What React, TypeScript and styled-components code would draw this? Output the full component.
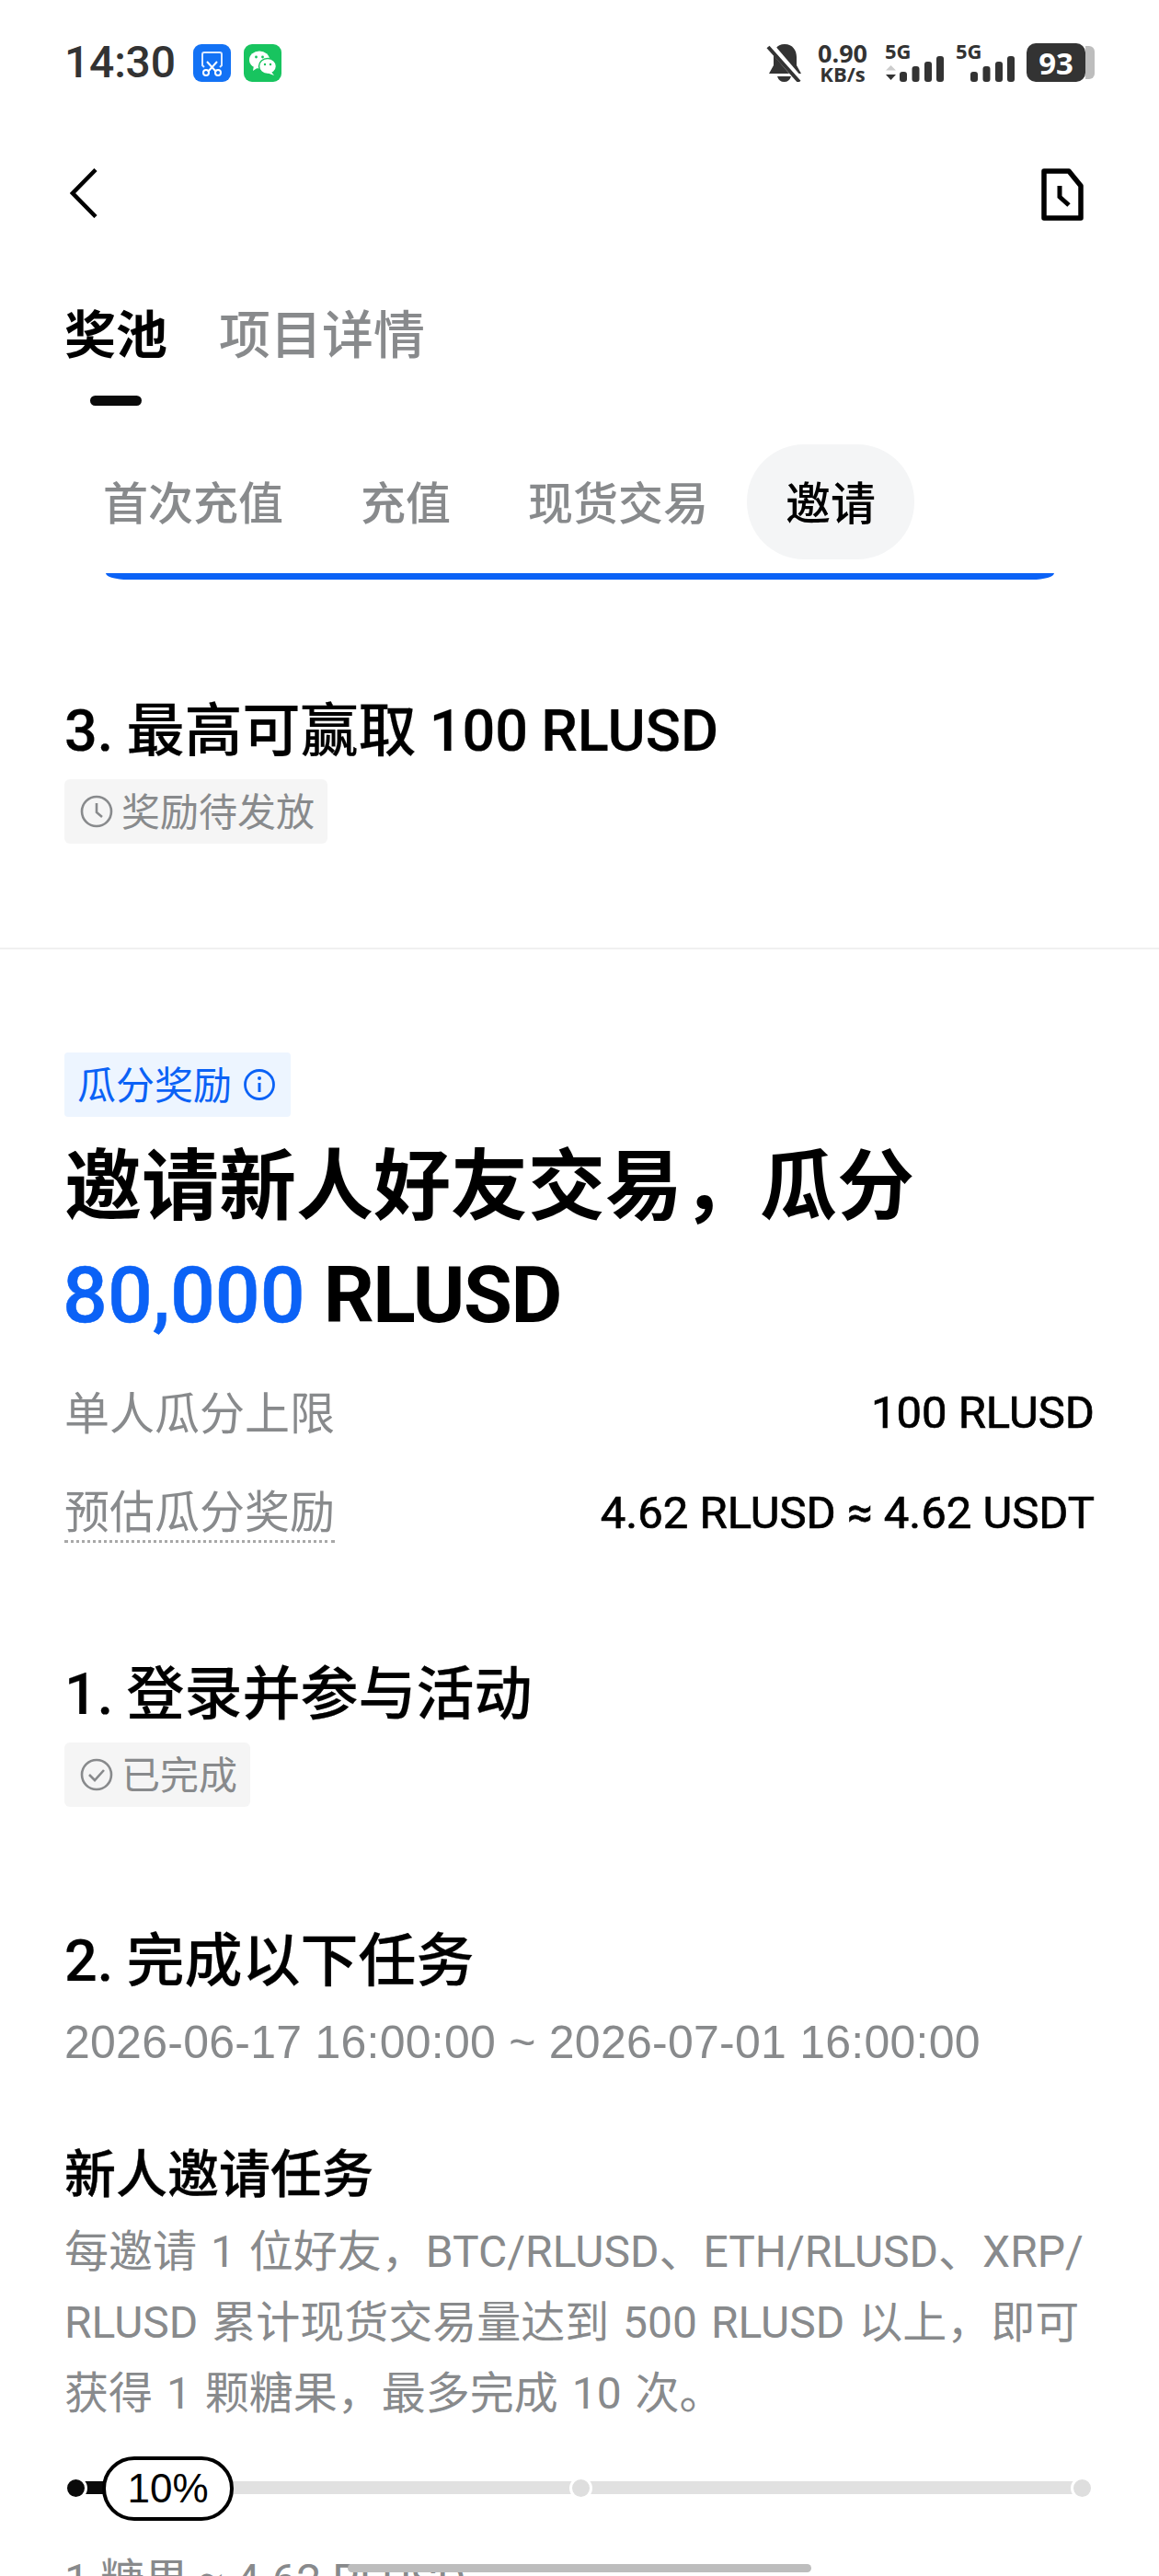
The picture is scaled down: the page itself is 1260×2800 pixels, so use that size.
import React from "react";
import styled, { createGlobalStyle } from "styled-components";

const GlobalStyle = createGlobalStyle`
  html, body {
    margin: 0;
    padding: 0;
    background: #fff;
  }
  * {
    box-sizing: border-box;
  }
`;

const fontStack = `"Liberation Sans", "Noto Sans CJK SC", sans-serif`;
const latinStack = `Roboto, "Noto Sans CJK SC", sans-serif`;
const blue = "#0b62f6";
const gray = "#888a8c";

const Page = styled.div`
  position: relative;
  width: 1260px;
  height: 2800px;
  overflow: hidden;
  background: #fff;
  color: #000;
  font-family: ${fontStack};
`;

const StatusBar = styled.div`
  display: flex;
  align-items: center;
  justify-content: space-between;
  height: 42px;
  margin-top: 47px;
  padding: 0 70px;
  color: #333;
`;

const StatusGroup = styled.div<{ $gap: number }>`
  display: flex;
  align-items: center;
  gap: ${(p) => p.$gap}px;
`;

const Clock = styled.span`
  width: 126px;
  font-family: Roboto, sans-serif;
  font-size: 48px;
  font-weight: 500;
  line-height: 42px;
  letter-spacing: -0.2px;
`;

const Speed = styled.div`
  display: flex;
  flex-direction: column;
  align-items: center;
  width: 52px;
  margin: 0 7px 0 4px;
  font-family: "Open Sans", sans-serif;
  font-weight: 700;
  color: #333;
`;

const SpeedValue = styled.span`
  font-size: 27px;
  line-height: 24px;
`;

const SpeedUnit = styled.span`
  font-size: 22px;
  line-height: 20px;
`;

const Battery = styled.div`
  position: relative;
  display: flex;
  align-items: center;
  justify-content: center;
  width: 64px;
  height: 42px;
  margin-right: 10px;
  border-radius: 10px;
  background: #333;
  color: #fff;
  font-family: "Open Sans", sans-serif;
  font-size: 33px;
  font-weight: 700;
  &::after {
    content: "";
    position: absolute;
    right: -10px;
    top: 3px;
    width: 10px;
    height: 36px;
    border-radius: 0 6px 6px 0;
    background: #bdbdbd;
  }
`;

const NavRow = styled.div`
  display: flex;
  align-items: flex-start;
  justify-content: space-between;
  height: 57px;
  margin-top: 94px;
  padding: 0 82px 0 76px;
`;

const MainTabs = styled.div`
  display: flex;
  gap: 56px;
  height: 72px;
  margin-top: 88px;
  padding: 2px 70px 0;
`;

const MainTab = styled.span<{ $active?: boolean }>`
  font-size: 56px;
  line-height: 70px;
  font-weight: ${(p) => (p.$active ? 700 : 500)};
  color: ${(p) => (p.$active ? "#000" : gray)};
`;

const TabMarker = styled.div`
  width: 56px;
  height: 11px;
  margin: 30px 0 0 98px;
  border-radius: 6px;
  background: #0a0a0a;
`;

const SubTabs = styled.div`
  display: flex;
  margin-top: 42px;
  padding-left: 70px;
`;

const SubTab = styled.div<{ $active?: boolean }>`
  display: flex;
  align-items: center;
  height: 125px;
  padding: 0 42px 5px;
  border-radius: 62px;
  font-size: 49px;
  font-weight: 500;
  color: ${(p) => (p.$active ? "#000" : gray)};
  background: ${(p) => (p.$active ? "#f4f5f6" : "transparent")};
`;

const CardEdge = styled.div`
  width: 1031px;
  height: 7px;
  margin: 15px 0 0 115px;
  border-radius: 0 0 24px 24px / 0 0 7px 7px;
  background: ${blue};
`;

const Section = styled.section<{ $top?: number }>`
  margin-top: ${(p) => p.$top ?? 0}px;
  padding: 0 70px;
`;

const StepTitle = styled.h3<{ $top?: number }>`
  height: 80px;
  margin: ${(p) => p.$top ?? 0}px 0 0;
  padding-top: 6px;
  font-family: ${latinStack};
  font-size: 63px;
  line-height: 74px;
  font-weight: 500;
  word-spacing: -1.5px;
  -webkit-text-stroke: 0.2px #000;
`;

const StatusTag = styled.div`
  display: inline-flex;
  align-items: center;
  gap: 9px;
  height: 70px;
  margin-top: 15px;
  padding: 0 14px 5px 17px;
  border-radius: 6px;
  background: #f5f5f5;
  color: ${gray};
  font-size: 42px;
  vertical-align: top;
  svg {
    margin-top: 5px;
  }
`;

const Divider = styled.div`
  height: 2px;
  margin-top: 113px;
  background: #f0f0f0;
`;

const RewardTag = styled.div`
  display: inline-flex;
  align-items: center;
  gap: 12px;
  height: 70px;
  padding: 0 16px 5px 14px;
  border-radius: 4px;
  background: #edf5ff;
  color: ${blue};
  font-size: 42px;
  vertical-align: top;
  svg {
    margin-top: 5px;
  }
`;

const Headline = styled.h1`
  margin: 18px 0 0;
  font-family: ${latinStack};
  font-size: 84px;
  line-height: 117px;
  font-weight: 700;
`;

const Amount = styled.span`
  margin-right: 20px;
  margin-left: -2px;
  color: ${blue};
  font-size: 86px;
  font-weight: 500;
  -webkit-text-stroke: 0.5px ${blue};
`;

const Unit = styled.span`
  font-size: 86px;
  letter-spacing: -1.5px;
`;

const InfoRows = styled.div`
  margin-top: 15px;
`;

const InfoRow = styled.div`
  display: flex;
  align-items: center;
  justify-content: space-between;
  height: 109px;
`;

const InfoLabel = styled.span<{ $dashed?: boolean }>`
  font-size: 49px;
  line-height: 60px;
  color: ${gray};
  border-bottom: ${(p) => (p.$dashed ? `3px dotted #a8a8a8` : "none")};
`;

const InfoValue = styled.span`
  padding-bottom: 3px;
  font-family: ${latinStack};
  font-size: 49px;
  font-weight: 400;
  -webkit-text-stroke: 0.7px #000;
`;

const DateRange = styled.div`
  margin-top: 19px;
  font-size: 50px;
  line-height: 64px;
  color: ${gray};
  letter-spacing: 0.25px;
`;

const TaskTitle = styled.h4`
  height: 72px;
  margin: 74px 0 0;
  padding-top: 4px;
  font-size: 56px;
  line-height: 68px;
  font-weight: 500;
  -webkit-text-stroke: 0.4px #000;
`;

const TaskBody = styled.p`
  margin: 11px 0 0;
  font-family: ${latinStack};
  font-size: 48px;
  line-height: 77px;
  word-spacing: 3px;
  color: ${gray};
  white-space: nowrap;
`;

const Progress = styled.div`
  position: relative;
  height: 70px;
  margin-top: 30px;
`;

const Track = styled.div`
  position: absolute;
  left: 3px;
  right: 14px;
  top: 27px;
  height: 14px;
  background: #e1e1e1;
`;

const TrackFill = styled.div<{ $width: number }>`
  position: absolute;
  left: 0;
  top: 0;
  bottom: 0;
  width: ${(p) => p.$width}px;
  background: #0a0a0a;
`;

const ProgressNode = styled.div<{ $left: number; $done?: boolean }>`
  position: absolute;
  left: ${(p) => p.$left}px;
  top: 22px;
  width: 25px;
  height: 25px;
  border: 3px solid #fff;
  border-radius: 50%;
  background: ${(p) => (p.$done ? "#0a0a0a" : "#dedede")};
`;

const ProgressBubble = styled.div`
  position: absolute;
  left: 41px;
  top: 0;
  display: flex;
  align-items: center;
  justify-content: center;
  width: 143px;
  height: 70px;
  border: 4px solid #000;
  border-radius: 35px;
  background: #fff;
  font-size: 44px;
`;

const RewardLine = styled.div`
  margin-top: 33px;
  font-family: ${latinStack};
  font-size: 48px;
  line-height: 64px;
  color: ${gray};
`;

const HomeIndicator = styled.div`
  position: absolute;
  left: 378px;
  top: 2787px;
  width: 504px;
  height: 9px;
  border-radius: 5px;
  background: #bdbdbd;
`;

const ScreenCutIcon = () => (
  <svg width="41" height="41" viewBox="0 0 41 41">
    <rect width="41" height="41" rx="9" fill="#1372f5" />
    <path d="M12 25 L10 23 V11 Q10 9 12 9 H29 Q31 9 31 11 V23 L29 25" fill="none" stroke="#dbe9ff" strokeWidth="2" />
    <path d="M15 19 L25 30 M26 19 L16 30" stroke="#fff" strokeWidth="2" />
    <circle cx="14" cy="31" r="3" fill="none" stroke="#fff" strokeWidth="2" />
    <circle cx="27" cy="31" r="3" fill="none" stroke="#fff" strokeWidth="2" />
  </svg>
);

const ChatIcon = () => (
  <svg width="41" height="41" viewBox="0 0 41 41">
    <rect width="41" height="41" rx="9" fill="#18c45f" />
    <ellipse cx="17" cy="17" rx="11" ry="9.5" fill="#fff" />
    <path d="M11 23 L10 29 L16 25 Z" fill="#fff" />
    <ellipse cx="26" cy="24" rx="9.5" ry="8.5" fill="#fff" stroke="#18c45f" strokeWidth="1.5" />
    <path d="M30 30 L33 34 L25 31 Z" fill="#fff" />
    <circle cx="13.5" cy="14" r="1.4" fill="#18c45f" />
    <circle cx="20.5" cy="14" r="1.4" fill="#18c45f" />
    <circle cx="23" cy="22" r="1.2" fill="#18c45f" />
    <circle cx="29" cy="22" r="1.2" fill="#18c45f" />
  </svg>
);

const BellOffIcon = () => (
  <svg width="40" height="42" viewBox="0 0 40 42">
    <path d="M20 1 C29 1 33 8 33 15 V24 L38 33 H3 L8 24 V15 C8 8 11 1 20 1 Z" fill="#333" />
    <path d="M12 36 H27 Q25 42 19.5 42 Q14 42 12 36 Z" fill="#333" />
    <path d="M2 0 L38 42" stroke="#fff" strokeWidth="8" />
    <path d="M2 4 L36 42" stroke="#333" strokeWidth="4" />
  </svg>
);

const SignalIcon = ({ arrows }: { arrows?: boolean }) => (
  <svg width="64" height="42" viewBox="0 0 64 42">
    <text x="0" y="17" fontFamily="Open Sans" fontWeight="700" fontSize="22" fill="#333">
      5G
    </text>
    {arrows && (
      <g>
        <path d="M6.5 24 L12 29.5 H1 Z" fill="#ccc" />
        <path d="M6.5 40 L12 34 H1 Z" fill="#333" />
      </g>
    )}
    <rect x="16" y="31" width="8" height="11" rx="3" fill="#333" />
    <rect x="29.5" y="25" width="8" height="17" rx="3" fill="#333" />
    <rect x="43" y="20" width="8" height="22" rx="3" fill="#333" />
    <rect x="56" y="14" width="8" height="28" rx="3" fill="#333" />
  </svg>
);

const BackIcon = () => (
  <svg width="30" height="54" viewBox="0 0 30 54">
    <path d="M28 1.5 L3 27 L28 52.5" fill="none" stroke="#000" strokeWidth="4.5" />
  </svg>
);

const HistoryIcon = () => (
  <svg width="46" height="57" viewBox="0 0 46 57">
    <path d="M3 3 H30 L43 19 V54 H3 Z" fill="none" stroke="#000" strokeWidth="5.5" strokeLinejoin="round" />
    <path d="M20 19 V31 L30 40" fill="none" stroke="#000" strokeWidth="5" />
  </svg>
);

const ClockIcon = () => (
  <svg width="36" height="36" viewBox="0 0 36 36">
    <circle cx="18" cy="18" r="16" fill="none" stroke={gray} strokeWidth="2.6" />
    <path d="M18 9 V19 L24 24" fill="none" stroke={gray} strokeWidth="2.6" />
  </svg>
);

const CheckIcon = () => (
  <svg width="36" height="36" viewBox="0 0 36 36">
    <circle cx="18" cy="18" r="16" fill="none" stroke={gray} strokeWidth="2.6" />
    <path d="M10 18 L16 24 L26 13" fill="none" stroke={gray} strokeWidth="2.6" />
  </svg>
);

const InfoIcon = () => (
  <svg width="36" height="36" viewBox="0 0 36 36">
    <circle cx="18" cy="18" r="15.5" fill="none" stroke={blue} strokeWidth="2.8" />
    <path d="M18 16 V26" stroke={blue} strokeWidth="3" />
    <circle cx="18" cy="11" r="2" fill={blue} />
  </svg>
);

const subTabs = ["首次充值", "充值", "现货交易", "邀请"];

export default function App() {
  return (
    <Page>
      <GlobalStyle />
      <StatusBar>
        <StatusGroup $gap={14}>
          <Clock>14:30</Clock>
          <ScreenCutIcon />
          <ChatIcon />
        </StatusGroup>
        <StatusGroup $gap={13}>
          <BellOffIcon />
          <Speed>
            <SpeedValue>0.90</SpeedValue>
            <SpeedUnit>KB/s</SpeedUnit>
          </Speed>
          <SignalIcon arrows />
          <SignalIcon />
          <Battery>93</Battery>
        </StatusGroup>
      </StatusBar>

      <NavRow>
        <BackIcon />
        <HistoryIcon />
      </NavRow>

      <MainTabs>
        <MainTab $active>奖池</MainTab>
        <MainTab>项目详情</MainTab>
      </MainTabs>
      <TabMarker />

      <SubTabs>
        {subTabs.map((label) => (
          <SubTab key={label} $active={label === "邀请"}>
            {label}
          </SubTab>
        ))}
      </SubTabs>
      <CardEdge />

      <Section $top={122}>
        <StepTitle>3. 最高可赢取 100 RLUSD</StepTitle>
        <StatusTag>
          <ClockIcon />
          奖励待发放
        </StatusTag>
      </Section>

      <Divider />

      <Section $top={112}>
        <RewardTag>
          瓜分奖励
          <InfoIcon />
        </RewardTag>
        <Headline>
          邀请新人好友交易，瓜分
          <br />
          <Amount>80,000</Amount>
          <Unit>RLUSD</Unit>
        </Headline>

        <InfoRows>
          <InfoRow>
            <InfoLabel>单人瓜分上限</InfoLabel>
            <InfoValue>100 RLUSD</InfoValue>
          </InfoRow>
          <InfoRow>
            <InfoLabel $dashed>预估瓜分奖励</InfoLabel>
            <InfoValue>4.62 RLUSD ≈ 4.62 USDT</InfoValue>
          </InfoRow>
        </InfoRows>

        <StepTitle $top={99}>1. 登录并参与活动</StepTitle>
        <StatusTag>
          <CheckIcon />
          已完成
        </StatusTag>

        <StepTitle $top={125}>2. 完成以下任务</StepTitle>
        <DateRange>2026-06-17 16:00:00 ~ 2026-07-01 16:00:00</DateRange>

        <TaskTitle>新人邀请任务</TaskTitle>
        <TaskBody>
          每邀请 1 位好友，BTC/RLUSD、ETH/RLUSD、XRP/
          <br />
          RLUSD 累计现货交易量达到 500 RLUSD 以上，即可
          <br />
          获得 1 颗糖果，最多完成 10 次。
        </TaskBody>

        <Progress>
          <Track>
            <TrackFill $width={60} />
          </Track>
          <ProgressNode $left={0} $done />
          <ProgressNode $left={549} />
          <ProgressNode $left={1094} />
          <ProgressBubble>10%</ProgressBubble>
        </Progress>

        <RewardLine>1 糖果 ≈ 4.62 RLUSD</RewardLine>
      </Section>

      <HomeIndicator />
    </Page>
  );
}
